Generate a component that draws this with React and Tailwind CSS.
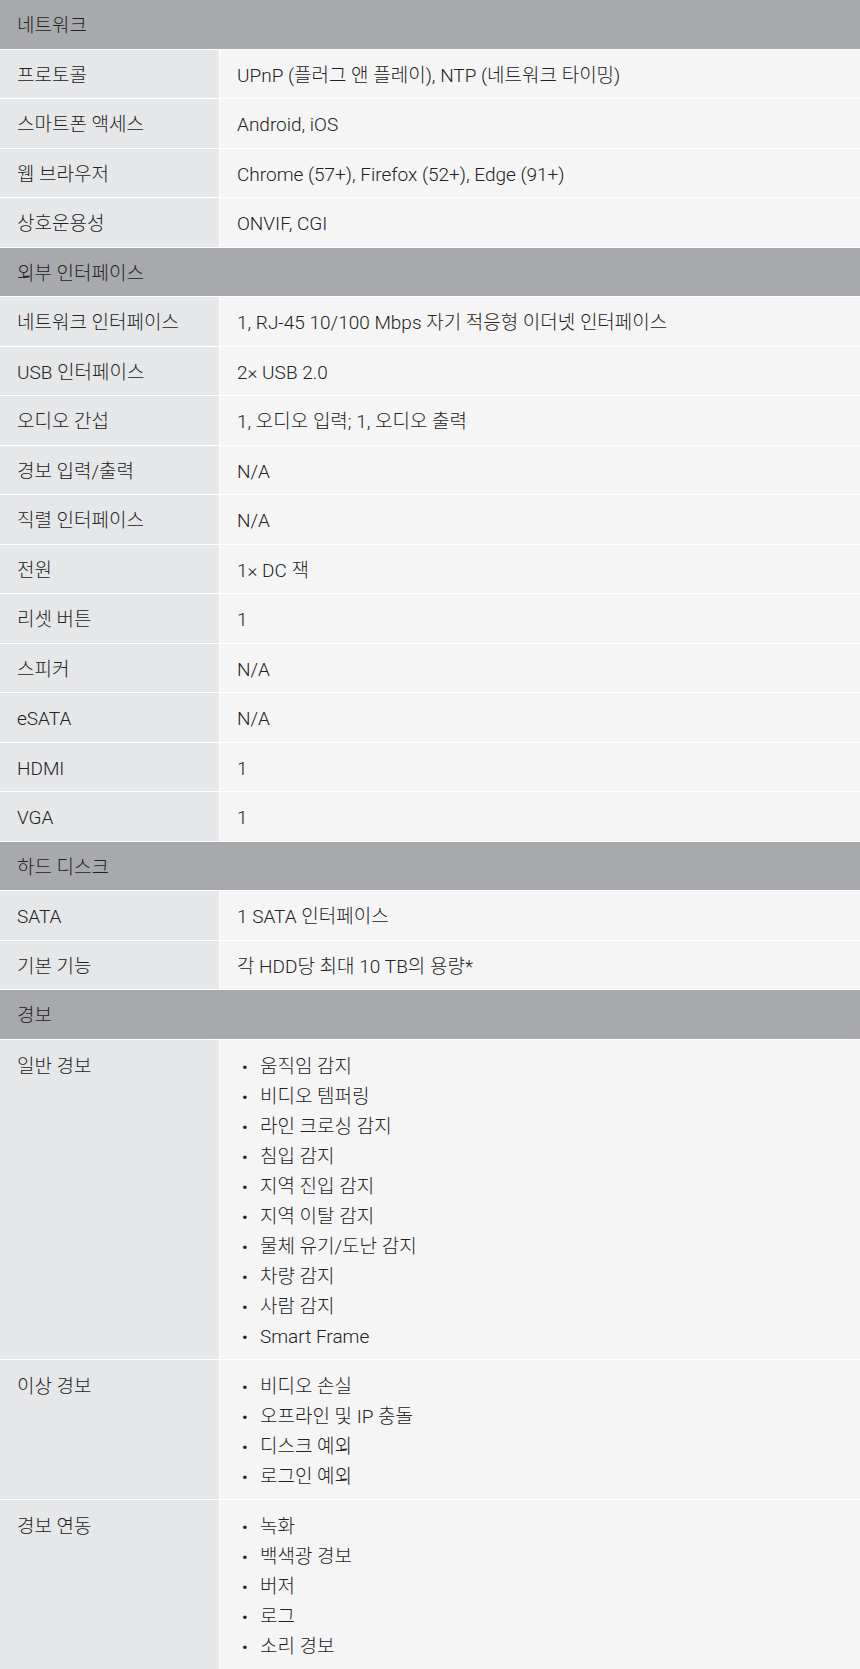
import React from "react";

const sections = [
  {
    title: "네트워크",
    rows: [
      ["프로토콜", "UPnP (플러그 앤 플레이), NTP (네트워크 타이밍)"],
      ["스마트폰 액세스", "Android, iOS"],
      ["웹 브라우저", "Chrome (57+), Firefox (52+), Edge (91+)"],
      ["상호운용성", "ONVIF, CGI"],
    ],
  },
  {
    title: "외부 인터페이스",
    rows: [
      ["네트워크 인터페이스", "1, RJ-45 10/100 Mbps 자기 적응형 이더넷 인터페이스"],
      ["USB 인터페이스", "2× USB 2.0"],
      ["오디오 간섭", "1, 오디오 입력; 1, 오디오 출력"],
      ["경보 입력/출력", "N/A"],
      ["직렬 인터페이스", "N/A"],
      ["전원", "1× DC 잭"],
      ["리셋 버튼", "1"],
      ["스피커", "N/A"],
      ["eSATA", "N/A"],
      ["HDMI", "1"],
      ["VGA", "1"],
    ],
  },
  {
    title: "하드 디스크",
    rows: [
      ["SATA", "1 SATA 인터페이스"],
      ["기본 기능", "각 HDD당 최대 10 TB의 용량*"],
    ],
  },
  {
    title: "경보",
    rows: [
      [
        "일반 경보",
        [
          "움직임 감지",
          "비디오 템퍼링",
          "라인 크로싱 감지",
          "침입 감지",
          "지역 진입 감지",
          "지역 이탈 감지",
          "물체 유기/도난 감지",
          "차량 감지",
          "사람 감지",
          "Smart Frame",
        ],
      ],
      ["이상 경보", ["비디오 손실", "오프라인 및 IP 충돌", "디스크 예외", "로그인 예외"]],
      ["경보 연동", ["녹화", "백색광 경보", "버저", "로그", "소리 경보"]],
    ],
  },
];

const SpecRow = ({ label, value }) => {
  const isList = Array.isArray(value);

  if (isList) {
    return (
      <div className="flex border-b border-white">
        <div className="w-[220px] shrink-0 border-r border-white bg-[#e6e7e9] pl-[17px] pt-[12px] pb-[7px] leading-[30px]">
          {label}
        </div>
        <div className="flex-1 bg-[#f5f5f5] pl-[22px] pt-[12px] pb-[7px]">
          <ul>
            {value.map((item) => (
              <li key={item} className="flex leading-[30px]">
                <span className="w-[18px] text-[17px] font-normal">•</span>
                <span>{item}</span>
              </li>
            ))}
          </ul>
        </div>
      </div>
    );
  }

  return (
    <div className="flex h-[49.5px] border-b border-white">
      <div className="flex w-[220px] shrink-0 items-center border-r border-white bg-[#e6e7e9] pt-[4px] pl-[17px]">
        {label}
      </div>
      <div className="flex flex-1 items-center bg-[#f5f5f5] pt-[4px] pl-[17px]">{value}</div>
    </div>
  );
};

const App = () => {
  return (
    <div
      className="w-[860px] bg-white text-[19px] font-light text-[#222]"
      style={{ fontFamily: 'Roboto, "Noto Sans CJK KR", sans-serif' }}
    >
      {sections.map((section) => (
        <div key={section.title}>
          {/* Section header */}
          <div className="flex h-[49.5px] items-center border-b border-white bg-[#a8a9ad] pt-[4px] pl-[17px]">
            {section.title}
          </div>
          {section.rows.map(([label, value]) => (
            <SpecRow key={label} label={label} value={value} />
          ))}
        </div>
      ))}
    </div>
  );
};

export default App;
